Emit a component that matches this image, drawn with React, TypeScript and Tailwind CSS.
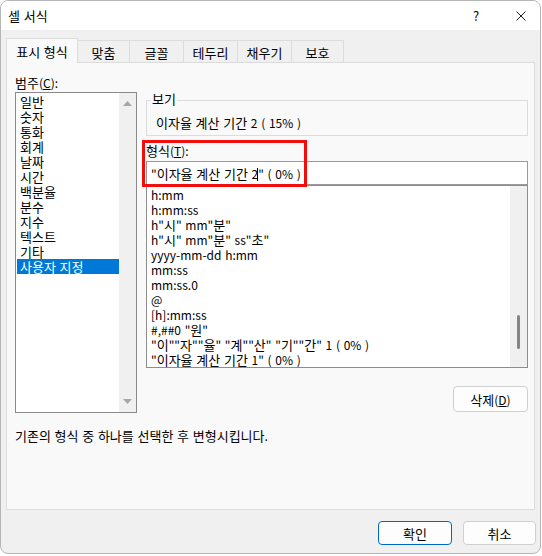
import React from "react";

const categories = ["일반", "숫자", "통화", "회계", "날짜", "시간", "백분율", "분수", "지수", "텍스트", "기타", "사용자 지정"];
const formats = [
  "h:mm",
  "h:mm:ss",
  'h"시" mm"분"',
  'h"시" mm"분" ss"초"',
  "yyyy-mm-dd h:mm",
  "mm:ss",
  "mm:ss.0",
  "@",
  "[h]:mm:ss",
  '#,##0 "원"',
  '"이""자""율" "계""산" "기""간" 1 ( 0% )',
  '"이자율 계산 기간 1" ( 0% )',
];

function K({ s }: { s: string }) {
  const parts = s.split(/([가-힣]+)/);
  return (
    <span>
      {parts.map((p, i) =>
        /[가-힣]/.test(p) ? (
          <span key={i} className="text-[13px]">
            {p}
          </span>
        ) : (
          <React.Fragment key={i}>{p}</React.Fragment>
        )
      )}
    </span>
  );
}

function Tab({ label, w }: { label: string; w: string }) {
  return (
    <div
      className={`${w} h-[22px] self-end flex items-center justify-center pt-[1px] border-t border-r border-[#dcdcdc] bg-[#f0f0f0] leading-[15px]`}
    >
      <K s={label} />
    </div>
  );
}

export default function App() {
  return (
    <div className="w-[542px] h-[556px] bg-white text-[12px] text-black font-['Noto_Sans_CJK_KR',sans-serif] [word-spacing:1px]">
      <div className="w-[541px] h-[554px] flex flex-col border border-[#b5b5b5] rounded-[8px] overflow-hidden bg-[#f0f0f0]">
        {/* Title bar */}
        <div className="h-[29px] bg-white flex items-center pl-[7px] shrink-0">
          <span className="leading-[15px]">
            <K s="셀 서식" />
          </span>
          <span className="ml-auto w-[20px] text-center text-[13px] leading-[15px]">?</span>
          <svg className="ml-[30px] mr-[14px]" width="10" height="10" viewBox="0 0 10 10">
            <path d="M0.5 0.5 L9.5 9.5 M9.5 0.5 L0.5 9.5" stroke="#1a1a1a" strokeWidth="1" fill="none" />
          </svg>
        </div>

        {/* Body */}
        <div className="flex-1 flex flex-col px-[5px]">
          {/* Tabs */}
          <div className="mt-[8px] h-[24px] flex">
            <div className="relative z-10 self-start w-[72px] h-[25px] flex items-center justify-center pt-[1px] border-t border-l border-r border-[#dcdcdc] bg-[#f9f9f9] leading-[15px]">
              <K s="표시 형식" />
            </div>
            <Tab label="맞춤" w="w-[52px]" />
            <Tab label="글꼴" w="w-[54px]" />
            <Tab label="테두리" w="w-[54px]" />
            <Tab label="채우기" w="w-[54px]" />
            <Tab label="보호" w="w-[52px]" />
          </div>

          {/* Panel */}
          <div className="h-[448px] border border-[#dcdcdc] bg-[#f9f9f9] flex flex-col">
            <div className="flex pl-[8px] pt-[12px]">
              {/* Left column */}
              <div className="w-[122px] flex flex-col">
                <div className="leading-[15px]">
                  <K s="범주" />(<span className="underline">C</span>):
                </div>
                <div className="mt-[2px] h-[321px] border border-[#8a8a8a] bg-white flex">
                  <div className="flex-1 pt-[1px] pl-[1px]">
                    {categories.map((c) => (
                      <div
                        key={c}
                        className={`h-[15px] leading-[15px] pl-[3px] whitespace-nowrap ${
                          c === "사용자 지정" ? "bg-[#0078d7] text-white" : ""
                        }`}
                      >
                        <K s={c} />
                      </div>
                    ))}
                  </div>
                  <div className="w-[17px] bg-[#f0f0f0] flex flex-col items-center justify-between pt-[8px] pb-[8px]">
                    <svg width="9" height="5" viewBox="0 0 9 5">
                      <path d="M4.5 0 L9 5 L0 5 Z" fill="#a6a6a6" />
                    </svg>
                    <svg width="9" height="5" viewBox="0 0 9 5">
                      <path d="M0 0 L9 0 L4.5 5 Z" fill="#a6a6a6" />
                    </svg>
                  </div>
                </div>
              </div>

              {/* Right column */}
              <div className="ml-[9px] w-[382px] flex flex-col">
                <div className="mt-[25px] relative h-[36px] border border-[#dcdcdc]">
                  <span className="absolute -top-[10px] left-[4px] px-[1px] bg-[#f9f9f9] leading-[15px]">
                    <K s="보기" />
                  </span>
                  <div className="pl-[9px] pt-[14px] leading-[15px] whitespace-nowrap">
                    <K s="이자율 계산 기간 2 ( 15% )" />
                  </div>
                </div>

                <div className="relative mt-[7px]">
                  <div className="leading-[15px]">
                    <K s="형식" />(<span className="underline">T</span>):
                  </div>
                  <div className="mt-[3px] h-[24px] border border-[#9a9a9a] bg-white flex items-center pl-[4px] leading-[15px] whitespace-nowrap">
                    <span>
                      <K s={'"이자율 계산 기간 2'} />
                      <span className="inline-block w-px h-[13px] bg-black -ml-[1px] align-[-2px]" />
                      {'" ( 0% )'}
                    </span>
                  </div>
                  <div className="absolute -left-[4px] -top-[3px] w-[165px] h-[47px] border-[3px] border-[#f20d0d]" />
                </div>

                <div className="h-[183px] border border-[#8d8d8d] bg-white flex">
                  <div className="flex-1 pt-[1px] pl-[4px]">
                    {formats.map((f) => (
                      <div key={f} className="h-[15px] leading-[15px] whitespace-nowrap">
                        <K s={f} />
                      </div>
                    ))}
                  </div>
                  <div className="w-[17px] bg-[#f0f0f0] flex flex-col items-center pt-[129px]">
                    <div className="w-[3px] h-[34px] rounded-full bg-[#858585]" />
                  </div>
                </div>

                <button className="mt-[18px] self-end w-[75px] h-[26px] rounded-[4px] border border-[#d0d0d0] bg-[#fdfdfd] leading-[15px] flex items-center justify-center">
                  <span>
                    <K s="삭제" />(<span className="underline">D</span>)
                  </span>
                </button>
              </div>
            </div>

            <div className="mt-[15px] pl-[8px] leading-[15px]">
              <K s="기존의 형식 중 하나를 선택한 후 변형시킵니다." />
            </div>
          </div>

          {/* Bottom buttons */}
          <div className="mt-[11px] flex justify-end gap-[11px] -mr-px">
            <button className="w-[74px] h-[24px] rounded-[4px] border border-[#0067c0] bg-[#fdfdfd] leading-[15px] flex items-center justify-center">
              <K s="확인" />
            </button>
            <button className="w-[73px] h-[24px] rounded-[4px] border border-[#d0d0d0] bg-[#fdfdfd] leading-[15px] flex items-center justify-center">
              <K s="취소" />
            </button>
          </div>
        </div>
      </div>
    </div>
  );
}
